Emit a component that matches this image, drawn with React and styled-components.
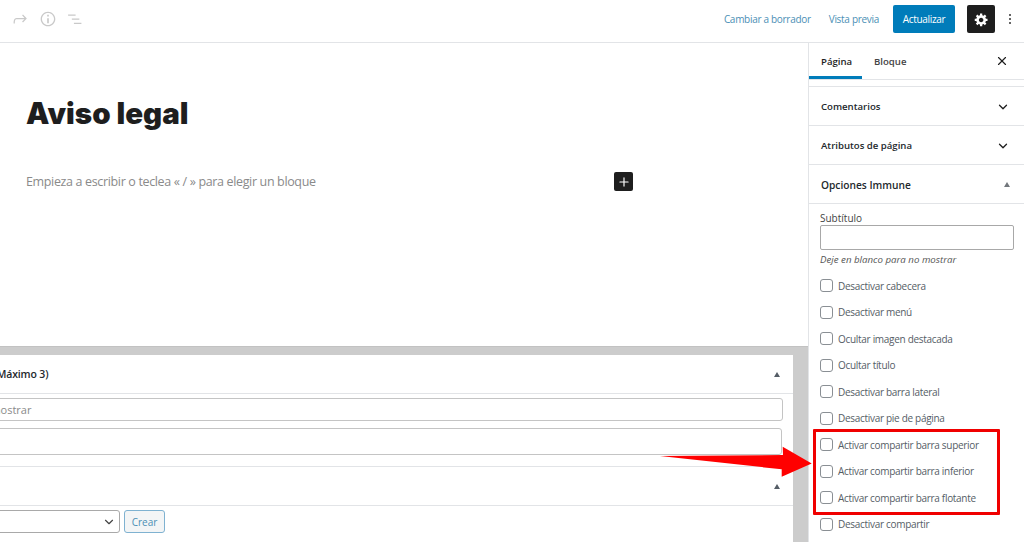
import styled, { createGlobalStyle } from 'styled-components';
import { ChevronDown, X, Plus } from 'lucide-react';

const GlobalStyle = createGlobalStyle`
	html, body {
		margin: 0;
		padding: 0;
		height: 100%;
		background: #fff;
		overflow: hidden;
	}
	* {
		box-sizing: border-box;
	}
	body {
		font-family: 'Open Sans', 'Liberation Sans', sans-serif;
		font-size: 10px;
		color: #444;
	}
`;

const options = [
	'Desactivar cabecera',
	'Desactivar menú',
	'Ocultar imagen destacada',
	'Ocultar título',
	'Desactivar barra lateral',
	'Desactivar pie de página',
	'Activar compartir barra superior',
	'Activar compartir barra inferior',
	'Activar compartir barra flotante',
	'Desactivar compartir',
];

function App() {
	return (
		<Page>
			<GlobalStyle />
			<Header>
				<HeaderTools>
					<ToolIcon viewBox='0 0 24 24'>
						<path d='M15.6 6.5l-1.1 1 2.9 3.3H8c-.9 0-1.7.3-2.3.9-1.4 1.5-1.4 4.2-1.4 5.6v.2h1.5v-.3c0-1.1 0-3.5 1-4.5.3-.3.7-.5 1.3-.5h9.2L14.5 15l1.1 1.1 4.6-4.6-4.6-5z' />
					</ToolIcon>
					<ToolIcon viewBox='0 0 24 24'>
						<path d='M12 3.2c-4.8 0-8.8 3.9-8.8 8.8 0 4.8 3.9 8.8 8.8 8.8 4.8 0 8.8-3.9 8.8-8.8 0-4.8-4-8.8-8.8-8.8zm0 16c-4 0-7.2-3.3-7.2-7.2C4.8 8 8 4.8 12 4.8s7.2 3.3 7.2 7.2c0 4-3.2 7.2-7.2 7.2zM11 17h2v-6h-2v6zm0-8h2V7h-2v2z' />
					</ToolIcon>
					<ToolIcon viewBox='0 0 24 24'>
						<path d='M2.5 6.5h9V8h-9zM7 11.5h9V13H7zM9.5 16.5h9V18h-9z' />
					</ToolIcon>
				</HeaderTools>
				<HeaderActions>
					<HeaderLink>Cambiar a borrador</HeaderLink>
					<HeaderLink $preview>Vista previa</HeaderLink>
					<PrimaryButton>Actualizar</PrimaryButton>
					<SettingsButton>
						<svg width='15' height='15' viewBox='0 0 20 20' fill='#fff'>
							<path d='M18 12h-2.18c-.17.7-.44 1.35-.81 1.93l1.54 1.54-2.1 2.1-1.54-1.54c-.58.36-1.23.63-1.91.79V19H8v-2.18c-.68-.16-1.33-.43-1.91-.79l-1.54 1.54-2.12-2.12 1.54-1.54c-.36-.58-.63-1.23-.79-1.91H1V9.03h2.17c.16-.7.44-1.35.8-1.94L2.43 5.55l2.1-2.1 1.54 1.54c.58-.37 1.24-.64 1.93-.81V2h3v2.18c.68.16 1.33.43 1.91.79l1.54-1.54 2.12 2.12-1.54 1.54c.36.59.64 1.24.8 1.94H18V12zm-8.5 1.5c1.66 0 3-1.34 3-3s-1.34-3-3-3-3 1.34-3 3 1.34 3 3 3z' />
						</svg>
					</SettingsButton>
					<Kebab>
						<i />
						<i />
						<i />
					</Kebab>
				</HeaderActions>
			</Header>

			<Body>
				<Editor>
					<Canvas>
						<Title>Aviso legal</Title>
						<BlockRow>
							<Placeholder>Empieza a escribir o teclea « / » para elegir un bloque</Placeholder>
							<AddBlock>
								<Plus size={14} strokeWidth={2} color='#fff' />
							</AddBlock>
						</BlockRow>
					</Canvas>
					<MetaArea>
						<MetaPanel>
							<MetaHeading>
								<span>Opciones (Máximo 3)</span>
								<Triangle />
							</MetaHeading>
							<MetaBody>
								<MetaInput placeholder='Deje en blanco para no mostrar' $right={10} $height={23} />
								<MetaInput $right={11} $height={27} $top={7} />
							</MetaBody>
							<MetaHeading>
								<span>&nbsp;</span>
								<Triangle />
							</MetaHeading>
							<MetaFooter>
								<MetaSelect>
									<ChevronDown size={14} strokeWidth={2} color='#444' />
								</MetaSelect>
								<CreateButton>Crear</CreateButton>
							</MetaFooter>
						</MetaPanel>
					</MetaArea>
				</Editor>

				<Sidebar>
					<Tabs>
						<Tab $active>Página</Tab>
						<Tab>Bloque</Tab>
						<CloseIcon>
							<X size={14} strokeWidth={2} color='#1e1e1e' />
						</CloseIcon>
					</Tabs>
					<Panels>
						<PanelRow>
							<span>Comentarios</span>
							<ChevronDown size={14} strokeWidth={2.2} color='#1e1e1e' />
						</PanelRow>
						<PanelRow>
							<span>Atributos de página</span>
							<ChevronDown size={14} strokeWidth={2.2} color='#1e1e1e' />
						</PanelRow>
						<PanelRow $strong>
							<span>Opciones Immune</span>
							<Triangle $small />
						</PanelRow>
					</Panels>
					<Options>
						<FieldLabel>Subtítulo</FieldLabel>
						<FieldInput />
						<Hint>Deje en blanco para no mostrar</Hint>
						<CheckList>
							{options.map((label) => (
								<CheckRow key={label}>
									<CheckBox />
									<span>{label}</span>
								</CheckRow>
							))}
						</CheckList>
					</Options>
				</Sidebar>
			</Body>

			<Highlight />
			<Arrow viewBox='0 0 1024 542'>
				<polygon points='660,456 783,455 782.7,446.7 811.7,463.5 781.7,476.7 781.7,469.3' fill='#ff0000' />
			</Arrow>
		</Page>
	);
}

export default App;

// ########## styled components ##########
const Page = styled.div`
	position: relative;
	width: 1024px;
	height: 542px;
	overflow: hidden;
	display: flex;
	flex-direction: column;
`;

const Header = styled.header`
	flex: none;
	height: 43px;
	border-bottom: 1px solid #e2e4e7;
	padding-bottom: 4px;
	display: flex;
	align-items: center;
	justify-content: space-between;
`;

const HeaderTools = styled.div`
	display: flex;
	align-items: center;
	gap: 8px;
	padding-left: 10px;
`;

const ToolIcon = styled.svg`
	width: 20px;
	height: 20px;
	fill: #c9c9c9;
`;

const HeaderActions = styled.div`
	display: flex;
	align-items: center;
`;

const HeaderLink = styled.a`
	color: #4b8fb5;
	font-size: 10px;
	letter-spacing: -0.3px;
	margin-right: ${(props) => (props.$preview ? '14px' : '18px')};
`;

const PrimaryButton = styled.button`
	width: 62px;
	height: 28px;
	border: none;
	border-radius: 2px;
	background: #007cba;
	color: #fff;
	font-family: inherit;
	font-size: 10px;
	letter-spacing: -0.3px;
	padding: 0;
`;

const SettingsButton = styled.button`
	width: 28px;
	height: 28px;
	margin-left: 12px;
	border: none;
	border-radius: 2px;
	background: #1e1e1e;
	padding: 0;
	display: flex;
	align-items: center;
	justify-content: center;
`;

const Kebab = styled.div`
	width: 29px;
	display: flex;
	flex-direction: column;
	align-items: center;
	gap: 2px;

	i {
		width: 2px;
		height: 2px;
		background: #333;
		border-radius: 50%;
	}
`;

const Body = styled.div`
	flex: 1;
	min-height: 0;
	display: flex;
`;

const Editor = styled.main`
	width: 808px;
	flex: none;
	display: flex;
	flex-direction: column;
	overflow: hidden;
`;

const Canvas = styled.div`
	flex: none;
	height: 303px;
	padding: 50px 175px 0 26px;
`;

const Title = styled.h1`
	margin: 0;
	font-family: 'Inter', 'Liberation Sans', sans-serif;
	font-size: 29.5px;
	line-height: 40px;
	font-weight: 900;
	color: #1e1e1e;
`;

const BlockRow = styled.div`
	margin-top: 39px;
	display: flex;
	align-items: center;
	justify-content: space-between;
`;

const Placeholder = styled.span`
	font-size: 12.5px;
	letter-spacing: -0.35px;
	color: #8a8a8a;
`;

const AddBlock = styled.span`
	width: 19px;
	height: 19px;
	background: #1e1e1e;
	border-radius: 2px;
	display: flex;
	align-items: center;
	justify-content: center;
`;

const MetaArea = styled.div`
	flex: 1;
	background: #cccccc;
	border-top: 1px solid #c2c2c2;
	padding: 8px 15px 0 0;
`;

const MetaPanel = styled.section`
	margin-left: -200px;
	background: #fff;
	height: 100%;
`;

const MetaHeading = styled.div`
	height: 39px;
	border-bottom: 1px solid #e2e4e7;
	padding: 0 13px 0 0;
	display: flex;
	align-items: center;
	justify-content: space-between;
	font-size: 10.5px;
	letter-spacing: -0.15px;
	font-weight: 600;
	color: #23282d;

	span {
		margin-left: 145px;
	}
`;

const Triangle = styled.i`
	width: 0;
	height: 0;
	border-left: 3.5px solid transparent;
	border-right: 3.5px solid transparent;
	border-bottom: 5px solid ${(props) => (props.$small ? '#72777c' : '#555d66')};
`;

const MetaBody = styled.div`
	height: 73px;
	padding-top: 4px;
	border-bottom: 1px solid #e2e4e7;
`;

const MetaInput = styled.input`
	display: block;
	width: calc(100% - ${(props) => props.$right}px);
	height: ${(props) => props.$height}px;
	margin-top: ${(props) => props.$top || 0}px;
	border: 1px solid #c4c4c4;
	border-radius: 3px;
	padding: 0 0 0 68px;
	font-family: inherit;
	font-size: 11px;
	outline: none;
	background: #fff;

	&::placeholder {
		color: #8a8a8a;
		opacity: 1;
	}
`;

const MetaFooter = styled.div`
	padding-top: 4px;
	display: flex;
	gap: 4px;
`;

const MetaSelect = styled.div`
	width: 320px;
	height: 23px;
	border: 1px solid #a9a9a9;
	border-radius: 3px;
	padding-right: 3px;
	display: flex;
	align-items: center;
	justify-content: flex-end;
`;

const CreateButton = styled.button`
	width: 41px;
	height: 23px;
	border: 1px solid #7fb2d1;
	border-radius: 3px;
	background: #f3f5f6;
	color: #4b8fb5;
	font-family: inherit;
	font-size: 10px;
	padding: 0;
`;

const Sidebar = styled.aside`
	width: 216px;
	flex: none;
	border-left: 1px solid #e2e4e7;
	overflow: hidden;
`;

const Tabs = styled.div`
	height: 37px;
	border-bottom: 1px solid #e2e4e7;
	position: relative;
	display: flex;
`;

const Tab = styled.div`
	height: 36px;
	width: ${(props) => (props.$active ? '53px' : '54px')};
	padding-left: 12px;
	padding-top: 1px;
	line-height: 36px;
	font-size: 9.6px;
	font-weight: 600;
	color: ${(props) => (props.$active ? '#1e1e1e' : '#444')};
	border-bottom: ${(props) => (props.$active ? '3px solid #007cba' : 'none')};
`;

const CloseIcon = styled.span`
	position: absolute;
	right: 15px;
	top: 11px;
	display: flex;
`;

const Panels = styled.div`
	margin-top: 6px;
	border-top: 1px solid #e2e4e7;
`;

const PanelRow = styled.div`
	height: 39px;
	border-bottom: 1px solid #e2e4e7;
	padding: 1px 14px 0 ${(props) => (props.$strong ? '12px' : '12px')};
	display: flex;
	align-items: center;
	justify-content: space-between;
	font-size: ${(props) => (props.$strong ? '10.2px' : '9.6px')};
	font-weight: 600;
	color: #23282d;
`;

const Options = styled.div`
	padding: 7px 10px 0 11px;
`;

const FieldLabel = styled.div`
	font-size: 10px;
	line-height: 14px;
	color: #444;
`;

const FieldInput = styled.div`
	height: 25px;
	border: 1px solid #a8a8a8;
	border-radius: 2px;
`;

const Hint = styled.div`
	margin-top: 3px;
	font-size: 9.7px;
	line-height: 14px;
	font-style: italic;
	color: #555;
`;

const CheckList = styled.div`
	margin-top: 12px;
	display: flex;
	flex-direction: column;
	gap: 13.5px;
`;

const CheckRow = styled.label`
	height: 13px;
	display: flex;
	align-items: center;
	gap: 5px;
	font-size: 10px;
	letter-spacing: -0.3px;
	color: #555d66;
`;

const CheckBox = styled.span`
	width: 13px;
	height: 13px;
	flex: none;
	border: 1px solid #8a8f94;
	border-radius: 3px;
	background: #fff;
`;

const Highlight = styled.div`
	position: absolute;
	left: 813px;
	top: 429px;
	width: 187px;
	height: 86px;
	border: 3px solid #f00000;
	border-radius: 1px;
`;

const Arrow = styled.svg`
	position: absolute;
	left: 0;
	top: 0;
	width: 1024px;
	height: 542px;
	pointer-events: none;
`;
// ########## styled components ##########
